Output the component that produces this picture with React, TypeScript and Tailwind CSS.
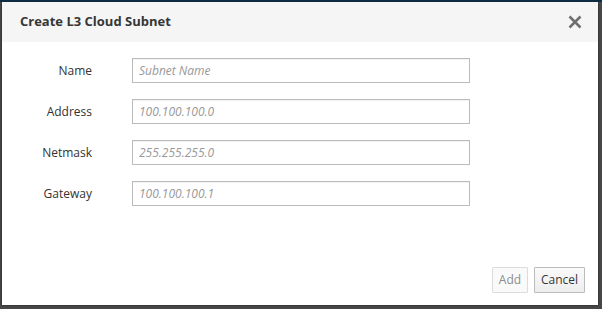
import React from 'react';

const fields = [
    { label: 'Name', placeholder: 'Subnet Name' },
    { label: 'Address', placeholder: '100.100.100.0' },
    { label: 'Netmask', placeholder: '255.255.255.0' },
    { label: 'Gateway', placeholder: '100.100.100.1' },
];

const App: React.FC = () => {
    return (
        <div
            className="w-[602px] h-[309px] bg-[#474747] border-t-2 border-[#0d2c42] pl-[2px] overflow-hidden"
            style={{ fontFamily: '"Open Sans", "Liberation Sans", sans-serif' }}
        >
            <div className="w-[596px] h-[303px] bg-white flex flex-col shadow-[0_0_2px_rgba(0,0,0,0.6)]">
                {/* Header */}
                <div className="h-[40px] bg-[#f5f5f5] flex items-center justify-between pl-[18px] pr-[13px]">
                    <span className="text-[13px] font-bold text-[#363636]">Create L3 Cloud Subnet</span>
                    <button className="text-[#6f6f6f] w-[20px] h-[20px] flex items-center justify-center" aria-label="Close">
                        <svg width="14" height="14" viewBox="0 0 14 14">
                            <path d="M1.5 1.5 L12.5 12.5 M12.5 1.5 L1.5 12.5" stroke="currentColor" strokeWidth="2.6" strokeLinecap="butt" />
                        </svg>
                    </button>
                </div>

                {/* Form */}
                <div className="flex flex-col gap-[16px] pt-[16px] pl-[18px]">
                    {fields.map((f) => (
                        <div key={f.label} className="flex items-center gap-[40px]">
                            <label className="w-[72px] text-right text-[12px] text-[#333333]">{f.label}</label>
                            <input
                                className="w-[338px] h-[25px] border border-[#bbbbbb] px-[6px] text-[12px] text-[#363636] placeholder:italic placeholder:text-[#999999] shadow-[inset_0_1px_1px_rgba(0,0,0,0.06)] outline-none"
                                placeholder={f.placeholder}
                            />
                        </div>
                    ))}
                </div>

                <div className="flex-1" />

                {/* Footer */}
                <div className="flex justify-end gap-[6px] pr-[13px] pb-[12px]">
                    <button
                        disabled
                        className="w-[36px] h-[26px] text-[12px] text-[#8b8d8f] bg-[#fafafa] border border-[#dcdcdc] rounded-[1px]"
                    >
                        Add
                    </button>
                    <button className="w-[51px] h-[26px] text-[12px] text-[#363636] bg-gradient-to-b from-[#fafafa] to-[#ededed] border border-[#bbbbbb] rounded-[1px]">
                        Cancel
                    </button>
                </div>
            </div>
        </div>
    );
};

export default App;
